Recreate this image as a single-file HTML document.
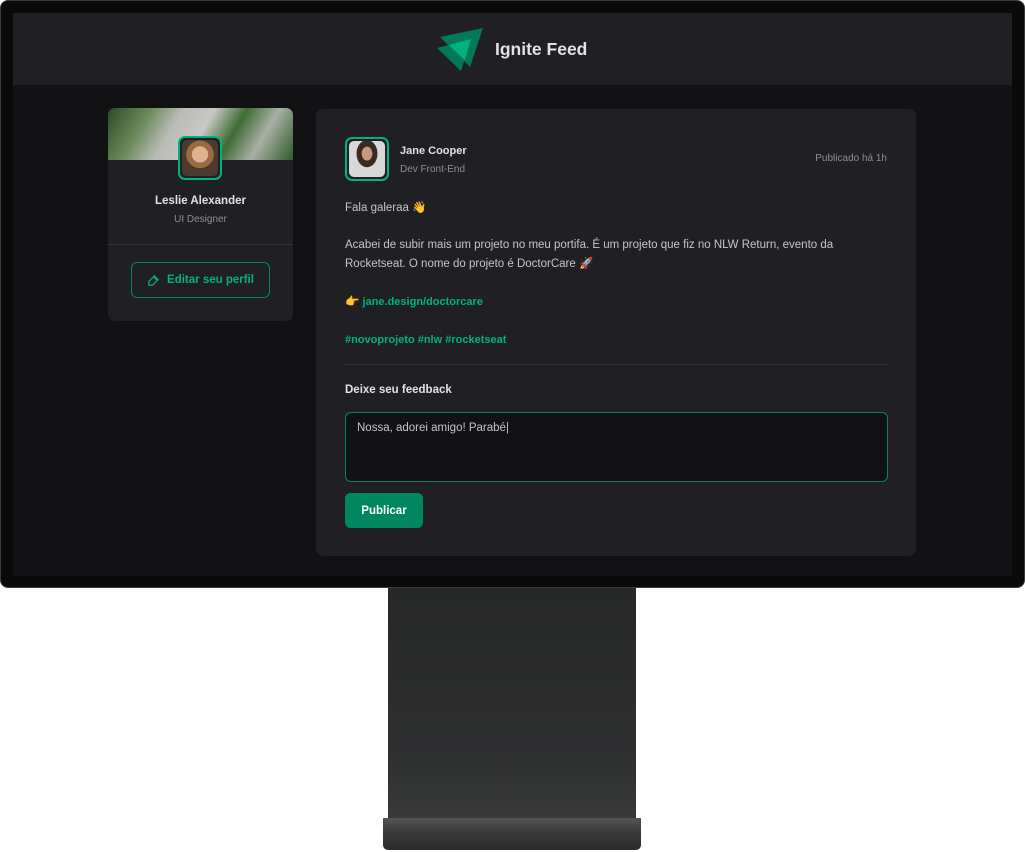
<!DOCTYPE html>
<html><head><meta charset="utf-8"><style>
*{margin:0;padding:0;box-sizing:border-box}
body{width:1025px;height:852px;background:#fff;position:relative;overflow:hidden;font-family:"Liberation Sans",sans-serif}
.frame{position:absolute;left:0;top:0;width:1025px;height:588px;background:#0a0a0b;border-radius:8px;border:1px solid #3a3a3a}
.screen{position:absolute;left:13px;top:13px;width:999px;height:563px;background:#121214;overflow:hidden}
.hdr{position:absolute;left:0;top:0;width:999px;height:72px;background:#202024}
.hdr .t{position:absolute;left:482px;top:26px;color:#e1e1e6;font-size:17.5px;font-weight:bold}
.side{position:absolute;left:95px;top:95px;width:185px;height:213px;background:#202024;border-radius:7px;overflow:hidden}
.cover{height:52px;background:linear-gradient(120deg,#2d4a2a 0%,#6a8a5a 20%,#b9bbb6 35%,#c8c8c5 50%,#3f6b35 65%,#a9b0a5 80%,#2f5a2b 100%)}
.av{position:absolute;border:2px solid #00b37e;border-radius:7px;background:#202024;padding:2px}
.av div{width:100%;height:100%;border-radius:5px}
.side .name{position:absolute;top:87px;width:100%;text-align:center;color:#e1e1e6;font-size:11.5px;font-weight:bold}
.side .role{position:absolute;top:106px;width:100%;text-align:center;color:#8d8d99;font-size:10px}
.side .line{position:absolute;top:136px;left:0;width:100%;height:1px;background:#323238}
.btn{position:absolute;left:23px;top:154px;width:139px;height:36px;border:1px solid #00875f;border-radius:6px;color:#00b37e;font-size:11.5px;font-weight:bold;display:flex;align-items:center;justify-content:center;gap:7px}
.post{position:absolute;left:303px;top:96px;width:600px;height:447px;background:#202024;border-radius:7px}
.post .n{position:absolute;left:84px;top:36px;color:#e1e1e6;font-size:11px;font-weight:bold}
.post .r{position:absolute;left:84px;top:55px;color:#8d8d99;font-size:10px}
.post .time{position:absolute;right:29px;top:44px;color:#8d8d99;font-size:10px}
.txt{position:absolute;left:29px;color:#c4c4cc;font-size:11.5px;line-height:19px}
.g{color:#00b37e;font-weight:bold;font-size:11px}
.hr{position:absolute;left:29px;top:255px;width:542px;height:1px;background:#323238}
.fb{position:absolute;left:29px;top:275px;color:#e1e1e6;font-size:11.5px;font-weight:bold}
.ta{position:absolute;left:29px;top:303px;width:543px;height:70px;background:#121214;border:1px solid #00875f;border-radius:6px;color:#c4c4cc;font-size:11.5px;padding:9px 11px}
.pub{position:absolute;left:29px;top:384px;width:78px;height:35px;background:#00875f;border-radius:5px;color:#fff;font-size:11.5px;font-weight:bold;display:flex;align-items:center;justify-content:center}
.stand{position:absolute;left:388px;top:588px;width:248px;height:240px;background:linear-gradient(180deg,#262727,#2e2f30 70%,#3a3b3c)}
.base{position:absolute;left:383px;top:818px;width:258px;height:32px;background:linear-gradient(180deg,#555,#3c3c3c 40%,#2a2a2a);border-radius:0 0 5px 5px}
</style></head><body>
<div class="stand"></div><div class="base"></div>
<div class="frame"></div>
<div class="screen">
 <div class="hdr">
  <svg style="position:absolute;left:422px;top:14px" width="50" height="46" viewBox="0 0 50 46">
   <polygon points="5,10 48,1 35,40" fill="#047857"/>
   <polygon points="2,21 36,12 26,44" fill="#00875f" opacity=".85"/>
   <polygon points="14,18 36,12 30,33" fill="#00b37e"/>
  </svg>
  <div class="t">Ignite Feed</div>
 </div>
 <div class="side">
  <div class="cover"></div>
  <div class="av" style="left:70px;top:28px;width:44px;height:44px"><div style="background:radial-gradient(circle at 50% 40%,#e0b090 0 28%,#9a6a40 30% 48%,#4a3a30 50%)"></div></div>
  <div class="name">Leslie Alexander</div>
  <div class="role">UI Designer</div>
  <div class="line"></div>
  <div class="btn"><svg width="13" height="13" viewBox="0 0 14 14" fill="none" stroke="#00b37e" stroke-width="1.3"><path d="M2 12h4L12 6 8 2 2 8z M7 3l4 4"/></svg>Editar seu perfil</div>
 </div>
 <div class="post">
  <div class="av" style="left:29px;top:28px;width:44px;height:44px"><div style="background:radial-gradient(ellipse at 50% 35%,#c79a80 0 20%,#3a2a22 22% 40%,#d8d8d8 42%)"></div></div>
  <div class="n">Jane Cooper</div>
  <div class="r">Dev Front-End</div>
  <div class="time">Publicado há 1h</div>
  <div class="txt" style="top:90px">Fala galeraa 👋</div>
  <div class="txt" style="top:127px">Acabei de subir mais um projeto no meu portifa. É um projeto que fiz no NLW Return, evento da<br>Rocketseat. O nome do projeto é DoctorCare 🚀</div>
  <div class="txt" style="top:184px">👉 <span class="g">jane.design/doctorcare</span></div>
  <div class="txt g" style="top:222px">#novoprojeto #nlw #rocketseat</div>
  <div class="hr"></div>
  <div class="fb">Deixe seu feedback</div>
  <div class="ta">Nossa, adorei amigo! Parabé|</div>
  <div class="pub">Publicar</div>
 </div>
</div>
</body></html>
